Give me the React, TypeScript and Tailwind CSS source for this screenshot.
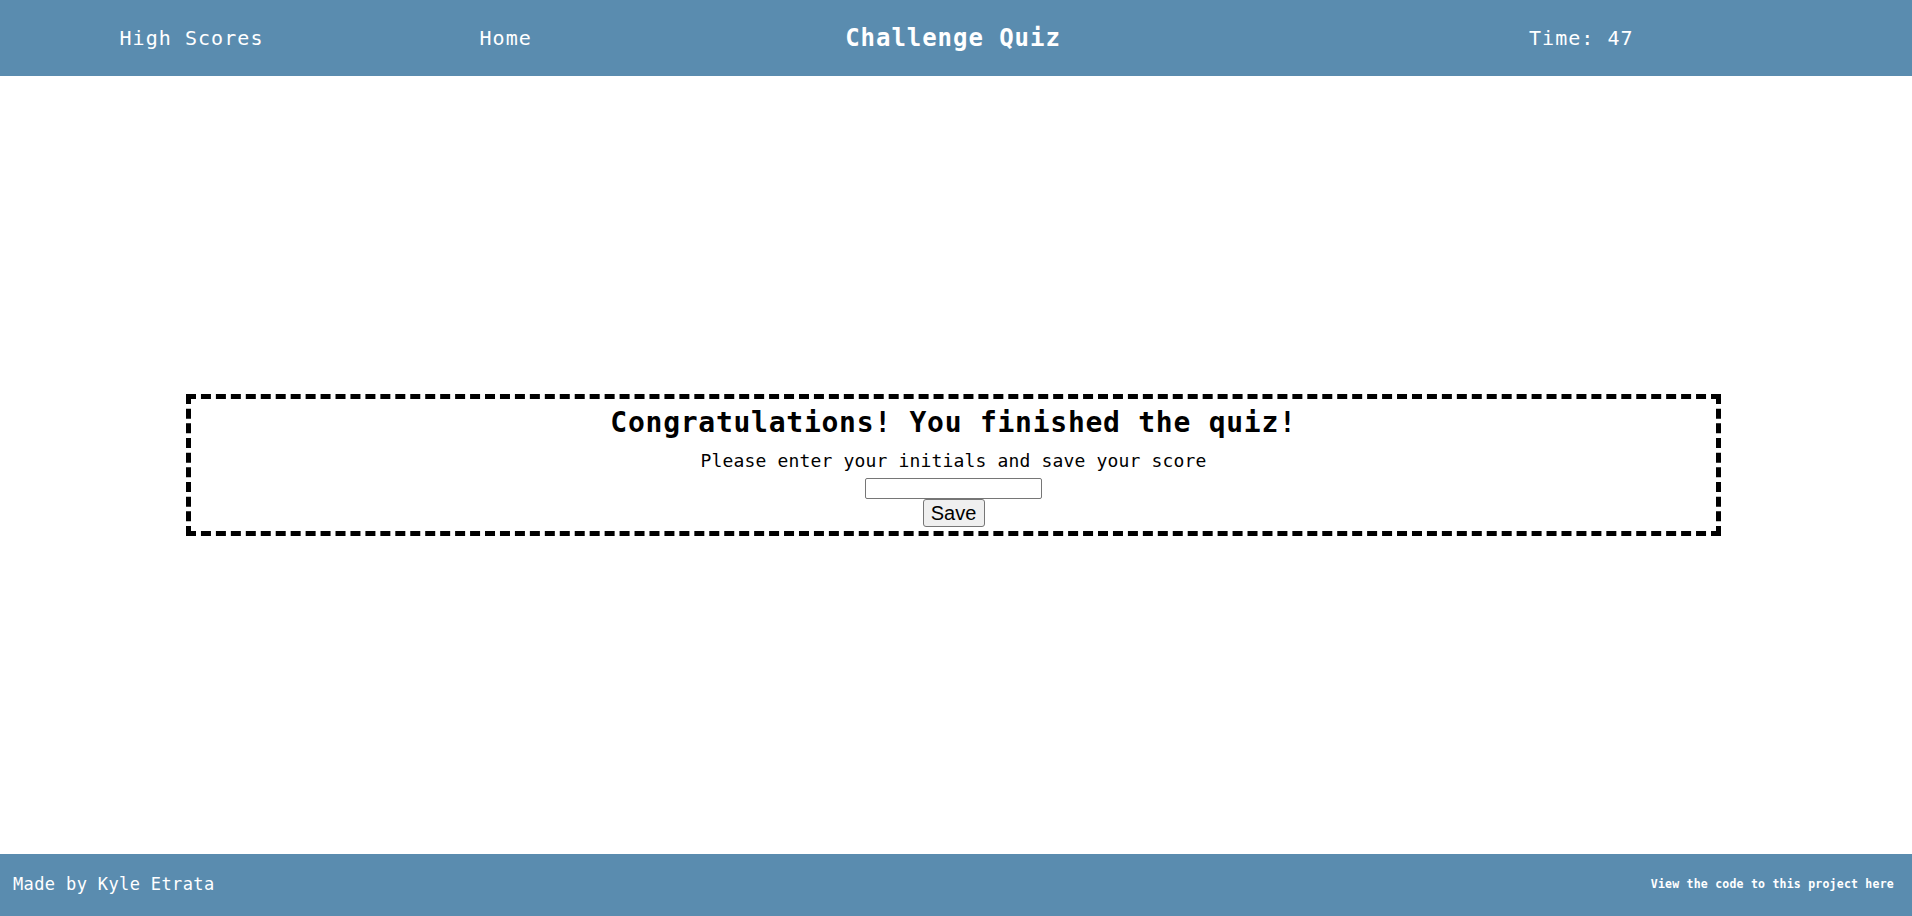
import React, { useState } from 'react';

const mono = "font-['DejaVu_Sans_Mono','Liberation_Mono',monospace]";

const Header: React.FC<{ time: number }> = ({ time }) => (
  <header className={`h-[76px] shrink-0 bg-[#5a8caf] text-white grid grid-cols-3 items-center ${mono}`}>
    <nav className="flex items-center justify-around pl-[14px]">
      <a href="#" className="text-[20px] tracking-[1.05px] leading-none">High Scores</a>
      <a href="#" className="ml-[5px] text-[20px] tracking-[1.05px] leading-none">Home</a>
    </nav>
    <h1 className="text-center pr-[6px] text-[24px] font-bold tracking-[0.95px] leading-none">Challenge Quiz</h1>
    <div className="text-center pr-[24px] text-[20px] tracking-[1.05px] leading-none">Time: {time}</div>
  </header>
);

const Footer: React.FC = () => (
  <footer className={`h-[62px] shrink-0 bg-[#5a8caf] text-white flex items-center justify-between pl-[13px] pr-[18px] ${mono}`}>
    <p className="text-[17px] tracking-[0.37px]">Made by Kyle Etrata</p>
    <a href="#" className="text-[11.5px] font-bold tracking-[0.23px]">View the code to this project here</a>
  </footer>
);

export default function App() {
  const [initials, setInitials] = useState('');

  return (
    <div className="h-screen w-full flex flex-col bg-white">
      <Header time={47} />

      <main className="flex-1 flex items-center">
        <section className={`ml-[186px] w-[1535px] h-[142px] border-[5px] border-dashed border-black pt-[7px] pb-[4px] flex flex-col items-center text-black ${mono}`}>
          <h2 className="text-[28px] font-bold tracking-[0.74px] leading-[34px]">Congratulations! You finished the quiz!</h2>
          <p className="mt-[10px] text-[18px] tracking-[0.16px] leading-[22px]">Please enter your initials and save your score</p>
          <input
            type="text"
            value={initials}
            onChange={(e) => setInitials(e.target.value)}
            className="mt-[6px] w-[177px] h-[21px] border border-[#767676] rounded-[2px] px-[2px] text-[13px] font-['Liberation_Sans',Arial,sans-serif] bg-white"
          />
          <button
            type="button"
            className="w-[62px] h-[28px] border border-[#767676] rounded-[3px] bg-[#efefef] text-[20px] leading-none text-black font-['Liberation_Sans',Arial,sans-serif] flex items-center justify-center"
          >
            Save
          </button>
        </section>
      </main>

      <Footer />
    </div>
  );
}
